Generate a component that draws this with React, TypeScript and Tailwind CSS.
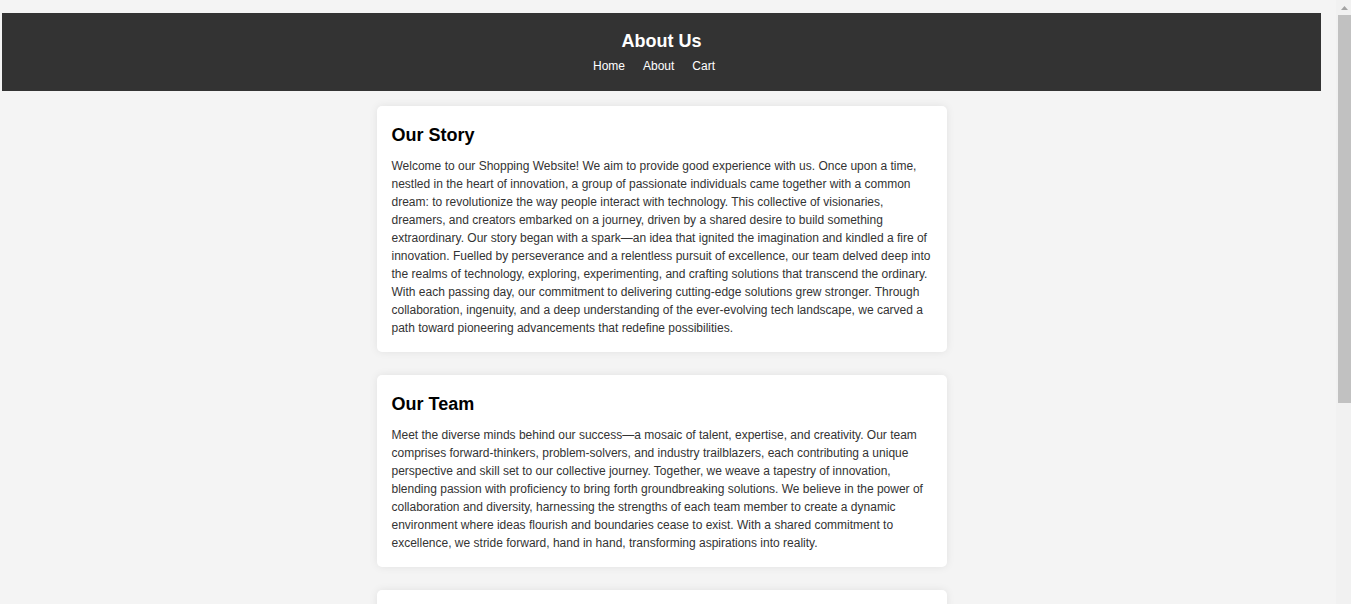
import React from "react";

const sections = [
  {
    title: "Our Story",
    text: "Welcome to our Shopping Website! We aim to provide good experience with us. Once upon a time, nestled in the heart of innovation, a group of passionate individuals came together with a common dream: to revolutionize the way people interact with technology. This collective of visionaries, dreamers, and creators embarked on a journey, driven by a shared desire to build something extraordinary. Our story began with a spark\u2014an idea that ignited the imagination and kindled a fire of innovation. Fuelled by perseverance and a relentless pursuit of excellence, our team delved deep into the realms of technology, exploring, experimenting, and crafting solutions that transcend the ordinary. With each passing day, our commitment to delivering cutting-edge solutions grew stronger. Through collaboration, ingenuity, and a deep understanding of the ever-evolving tech landscape, we carved a path toward pioneering advancements that redefine possibilities.",
  },
  {
    title: "Our Team",
    text: "Meet the diverse minds behind our success\u2014a mosaic of talent, expertise, and creativity. Our team comprises forward-thinkers, problem-solvers, and industry trailblazers, each contributing a unique perspective and skill set to our collective journey. Together, we weave a tapestry of innovation, blending passion with proficiency to bring forth groundbreaking solutions. We believe in the power of collaboration and diversity, harnessing the strengths of each team member to create a dynamic environment where ideas flourish and boundaries cease to exist. With a shared commitment to excellence, we stride forward, hand in hand, transforming aspirations into reality.",
  },
  {
    title: "Our Mission",
    text: "Our mission is simple: to make shopping effortless, enjoyable, and accessible for everyone. We carefully curate every product in our catalogue, partner with trusted suppliers, and continuously refine our platform so that you can find exactly what you need with confidence. Customer satisfaction lies at the heart of everything we do, and we are committed to building lasting relationships founded on trust, quality, and exceptional service.",
  },
];

export default function App() {
  return (
    <div
      className="min-h-screen bg-[#f4f4f4] pt-[13px] pb-[30px] text-[#333333]"
      style={{ fontFamily: '"Liberation Sans", Arial, sans-serif' }}
    >
      <div className="ml-[2px] w-[1319px]">
        <header className="bg-[#333333] pt-[15px] pb-[16px] text-center text-white">
          <h1 className="m-0 text-[18px] font-bold leading-[27px]">About Us</h1>
          <nav className="mt-[2px] flex justify-center gap-[18px] pr-[15px] text-[12px] leading-[18px]">
            <a className="text-white">Home</a>
            <a className="text-white">About</a>
            <a className="text-white">Cart</a>
          </nav>
        </header>
        <main className="mx-auto mt-[15px] flex w-[570px] flex-col gap-[23.5px]">
          {sections.map((s) => (
            <section
              key={s.title}
              className="rounded-[5px] bg-white p-[15px] shadow-[0_0_8px_rgba(0,0,0,0.08)]"
            >
              <h2 className="mt-[1px] mb-[7.5px] text-[18px] font-bold leading-[27px] text-black">{s.title}</h2>
              <p className="text-[12px] leading-[18px] text-[#333333]">{s.text}</p>
            </section>
          ))}
        </main>
      </div>
      {/* window scrollbar overlay */}
      <div className="fixed top-0 right-0 flex h-screen w-[15px] flex-col bg-[#f1f1f1]">
        <div className="flex h-[15px] items-center justify-center pl-[2px]">
          <svg width="7" height="4" viewBox="0 0 7 4">
            <polygon points="3.5,0 7,4 0,4" fill="#a3a3a3" />
          </svg>
        </div>
        <div className="ml-[2px] h-[388px] bg-[#c1c1c1]" />
      </div>
    </div>
  );
}
